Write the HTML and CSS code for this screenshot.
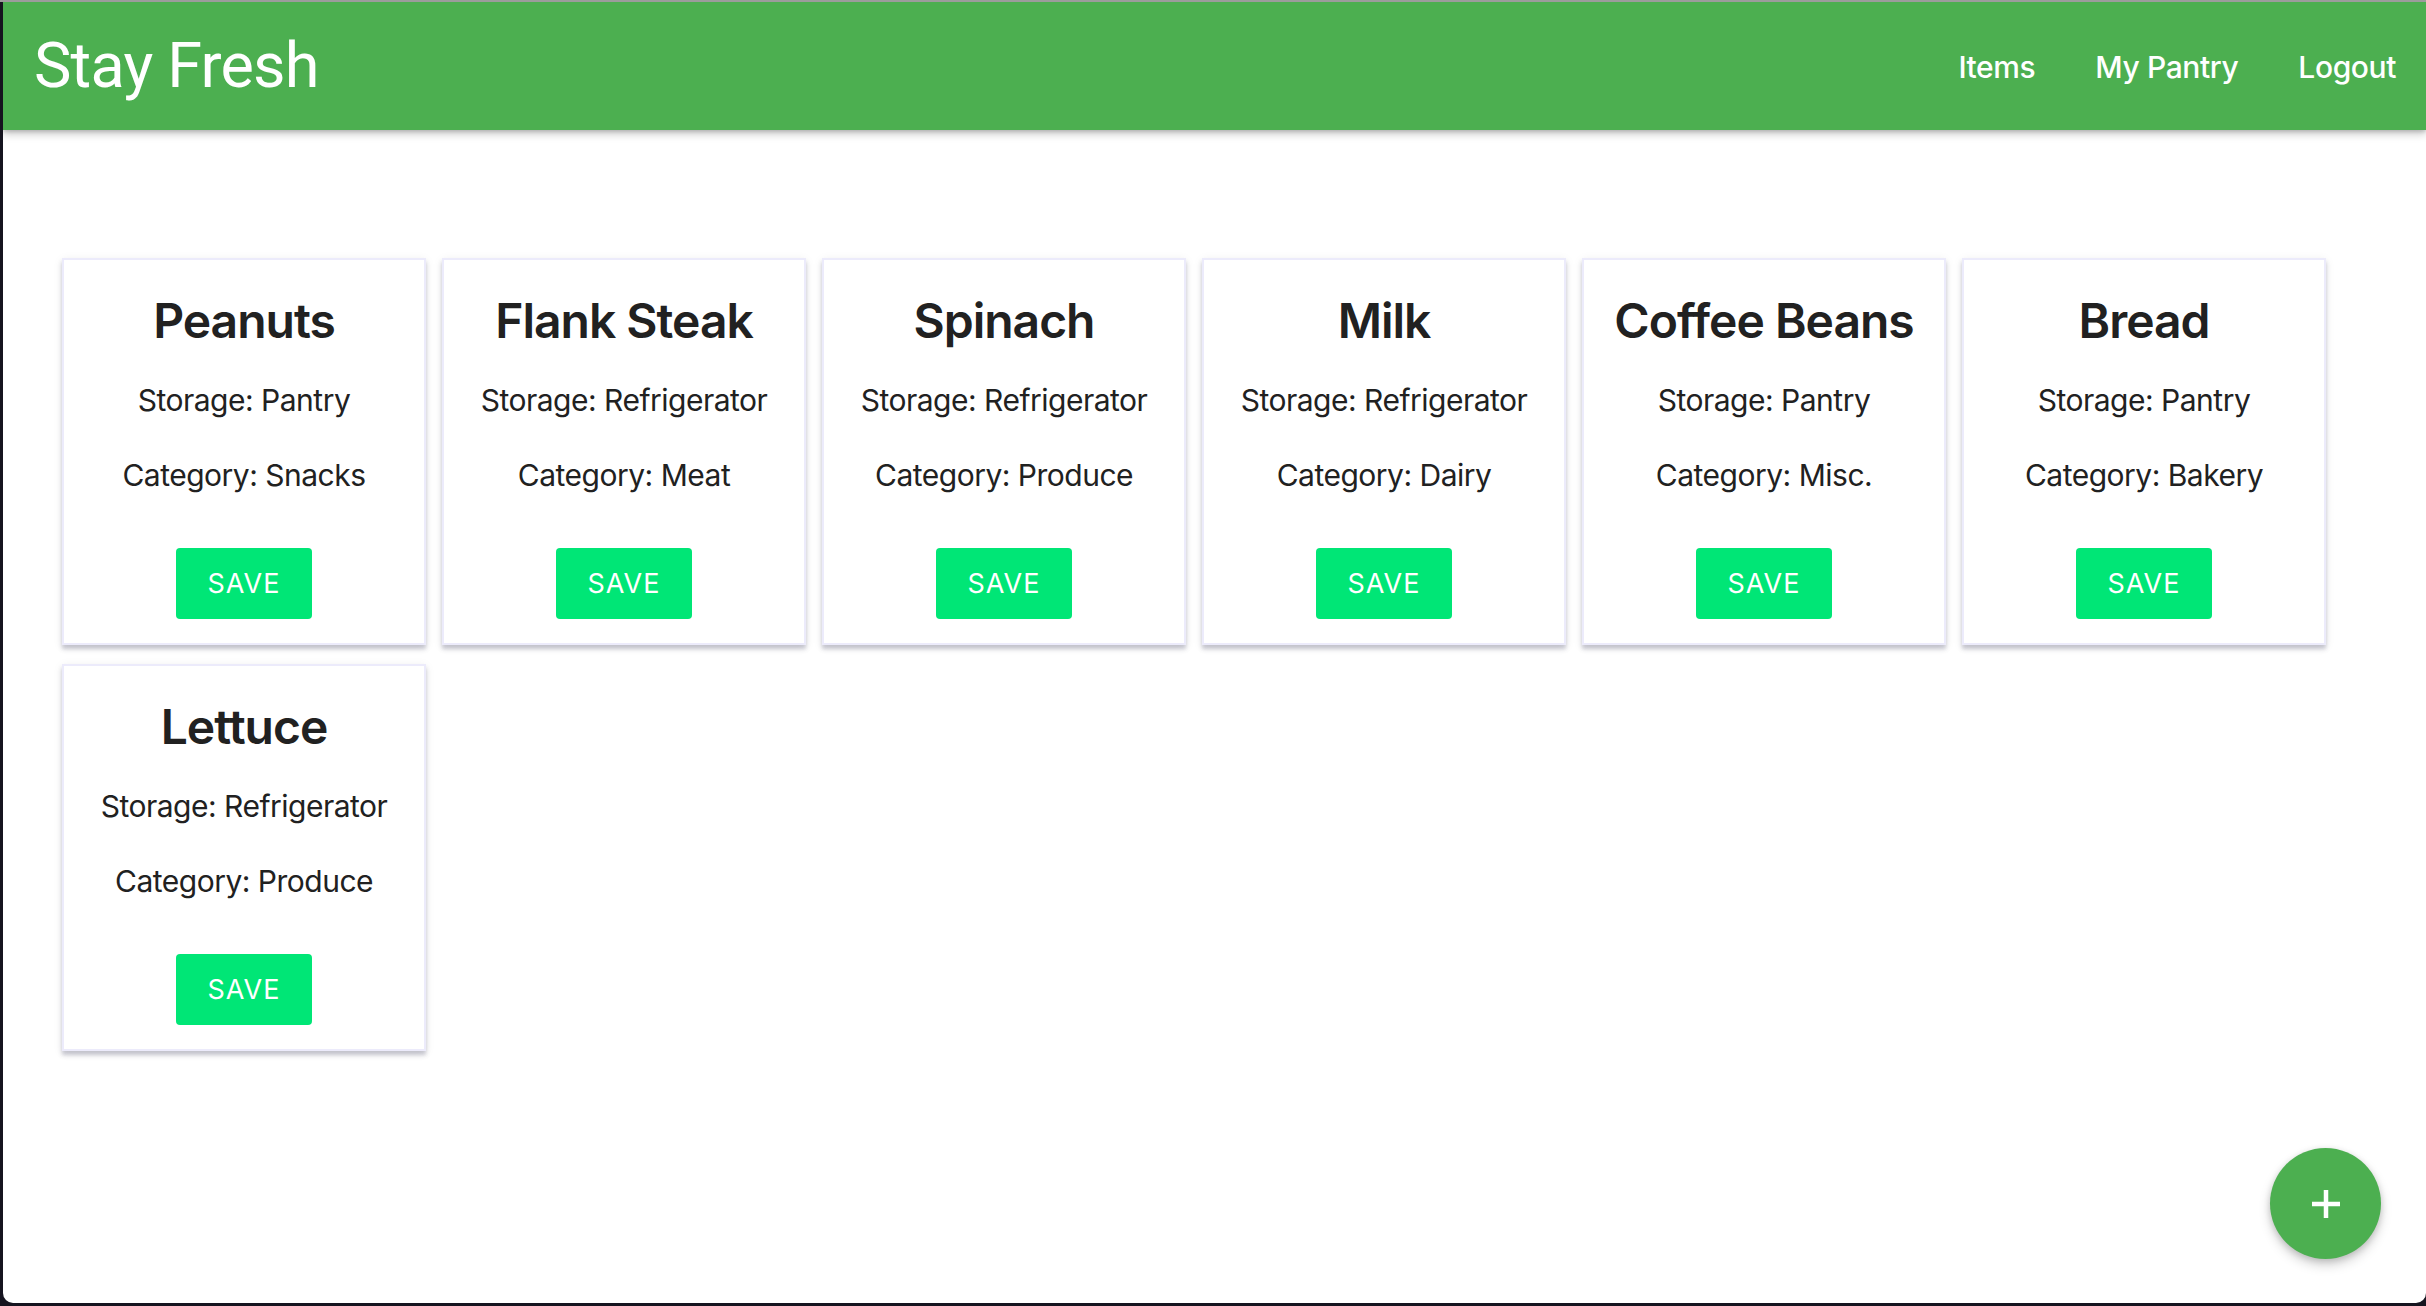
FILE: index.html
```html
<!DOCTYPE html>
<html lang="en">
<head>
<meta charset="utf-8">
<title>Stay Fresh</title>
<link rel="stylesheet" href="styles.css">
</head>
<body>
<div class="window">
  <nav class="nav">
    <a class="brand" href="#">Stay Fresh</a>
    <ul class="nav-links">
      <li><a href="#">Items</a></li>
      <li><a href="#">My Pantry</a></li>
      <li><a href="#">Logout</a></li>
    </ul>
  </nav>
  <main class="grid">
    <div class="card">
      <h2 class="card-title">Peanuts</h2>
      <p class="card-line">Storage: Pantry</p>
      <p class="card-line">Category: Snacks</p>
      <button class="btn">SAVE</button>
    </div>
    <div class="card">
      <h2 class="card-title">Flank Steak</h2>
      <p class="card-line">Storage: Refrigerator</p>
      <p class="card-line">Category: Meat</p>
      <button class="btn">SAVE</button>
    </div>
    <div class="card">
      <h2 class="card-title">Spinach</h2>
      <p class="card-line">Storage: Refrigerator</p>
      <p class="card-line">Category: Produce</p>
      <button class="btn">SAVE</button>
    </div>
    <div class="card">
      <h2 class="card-title">Milk</h2>
      <p class="card-line">Storage: Refrigerator</p>
      <p class="card-line">Category: Dairy</p>
      <button class="btn">SAVE</button>
    </div>
    <div class="card">
      <h2 class="card-title">Coffee Beans</h2>
      <p class="card-line">Storage: Pantry</p>
      <p class="card-line">Category: Misc.</p>
      <button class="btn">SAVE</button>
    </div>
    <div class="card">
      <h2 class="card-title">Bread</h2>
      <p class="card-line">Storage: Pantry</p>
      <p class="card-line">Category: Bakery</p>
      <button class="btn">SAVE</button>
    </div>
    <div class="card">
      <h2 class="card-title">Lettuce</h2>
      <p class="card-line">Storage: Refrigerator</p>
      <p class="card-line">Category: Produce</p>
      <button class="btn">SAVE</button>
    </div>
  </main>
  <button class="fab" aria-label="Add item">
    <svg width="28" height="28" viewBox="0 0 28 28"><path d="M14 0v28M0 14h28" stroke="#fff" stroke-width="4.5" fill="none"/></svg>
  </button>
</div>
</body>
</html>
```
FILE: styles.css
```css
* { box-sizing: border-box; }
html, body { margin: 0; padding: 0; }
body {
  background: #15141f;
  border-top: 2px solid #9c9c9c;
  padding: 0 0 3px 3px;
  height: 1306px;
  overflow: hidden;
  font-family: Inter, "Noto Sans", sans-serif;
  color: #212121;
}
.window {
  position: relative;
  height: 1301px;
  background: #fff;
  border-radius: 0 0 10px 10px;
  overflow: hidden;
}
.nav {
  height: 128px;
  background: #4caf50;
  display: flex;
  align-items: center;
  justify-content: space-between;
  box-shadow: 0 4px 8px rgba(0,0,0,0.22), 0 2px 3px rgba(0,0,0,0.12);
  position: relative;
  z-index: 2;
}
.brand {
  font-family: Roboto, "Liberation Sans", sans-serif;
  font-size: 63px;
  letter-spacing: -0.8px;
  color: #fff;
  text-decoration: none;
  padding-left: 31px;
  line-height: 128px;
}
.nav-links {
  list-style: none;
  margin: 0;
  padding: 0;
  display: flex;
}
.nav-links a {
  display: block;
  padding: 2px 30px 0;
  line-height: 126px;
  font-size: 30px;
  font-weight: 500;
  letter-spacing: -0.4px;
  color: #fff;
  text-decoration: none;
}
.grid {
  display: grid;
  grid-template-columns: repeat(6, 364px);
  column-gap: 16px;
  row-gap: 19px;
  padding: 128px 0 0 59px;
}
.card {
  height: 387px;
  background: #fff;
  border: 2px solid #ecebfb;
  box-shadow: 0 4px 4px rgba(70,70,100,0.28), 0 2px 10px rgba(0,0,0,0.07);
  display: flex;
  flex-direction: column;
  align-items: center;
  padding-top: 32px;
  text-align: center;
}
.card-title {
  margin: 0;
  font-size: 48px;
  font-weight: 600;
  line-height: 58px;
  letter-spacing: -1px;
}
.card-line {
  margin: 28px 0 0;
  font-size: 30px;
  line-height: 44px;
  letter-spacing: -0.5px;
}
.card-line + .card-line { margin-top: 31px; }
.btn {
  margin-top: 51px;
  height: 71px;
  padding: 0 32px;
  border: none;
  border-radius: 4px;
  background: #00e676;
  color: #fff;
  font-family: Inter, "Noto Sans", sans-serif;
  font-size: 27px;
  letter-spacing: 1px;
  line-height: 71px;
}
.fab {
  position: absolute;
  right: 45px;
  bottom: 44px;
  width: 111px;
  height: 111px;
  border: none;
  border-radius: 50%;
  background: #4caf50;
  display: flex;
  align-items: center;
  justify-content: center;
  box-shadow: 0 6px 12px rgba(0,0,0,0.18), 0 2px 6px rgba(0,0,0,0.14);
  padding: 0;
}
```
